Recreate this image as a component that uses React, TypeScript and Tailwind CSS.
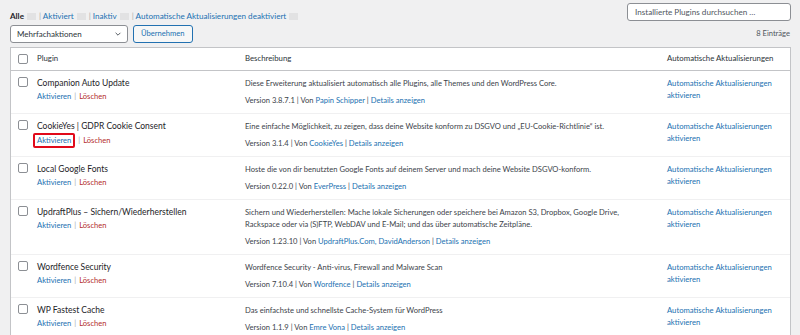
import React from 'react';

type Plugin = {
  name: string;
  desc: string[];
  version: string;
  authors: string;
  highlight?: boolean;
};

const plugins: Plugin[] = [
  {
    name: 'Companion Auto Update',
    desc: ['Diese Erweiterung aktualisiert automatisch alle Plugins, alle Themes und den WordPress Core.'],
    version: '3.8.7.1',
    authors: 'Papin Schipper',
  },
  {
    name: 'CookieYes | GDPR Cookie Consent',
    desc: ['Eine einfache Möglichkeit, zu zeigen, dass deine Website konform zu DSGVO und „EU-Cookie-Richtlinie“ ist.'],
    version: '3.1.4',
    authors: 'CookieYes',
    highlight: true,
  },
  {
    name: 'Local Google Fonts',
    desc: ['Hoste die von dir benutzten Google Fonts auf deinem Server und mach deine Website DSGVO-konform.'],
    version: '0.22.0',
    authors: 'EverPress',
  },
  {
    name: 'UpdraftPlus – Sichern/Wiederherstellen',
    desc: [
      'Sichern und Wiederherstellen: Mache lokale Sicherungen oder speichere bei Amazon S3, Dropbox, Google Drive,',
      'Rackspace oder via (S)FTP, WebDAV und E-Mail; und das über automatische Zeitpläne.',
    ],
    version: '1.23.10',
    authors: 'UpdraftPlus.Com, DavidAnderson',
  },
  {
    name: 'Wordfence Security',
    desc: ['Wordfence Security - Anti-virus, Firewall and Malware Scan'],
    version: '7.10.4',
    authors: 'Wordfence',
  },
  {
    name: 'WP Fastest Cache',
    desc: ['Das einfachste und schnellste Cache-System für WordPress'],
    version: '1.1.9',
    authors: 'Emre Vona',
  },
];

const Count = () => <span className="inline-block w-[9px] h-[7px] bg-[#e2e2e3] mx-[3px] align-middle" />;

const Checkbox = () => (
  <div className="w-[10px] h-[10px] border border-[#8c8f94] rounded-[2px] bg-white" />
);

export default function App() {
  return (
    <div
      className="w-[800px] h-[335px] overflow-hidden bg-[#f0f0f1] pl-[10px] pr-[9px] text-[7.6px] text-[#3c434a] whitespace-nowrap"
      style={{ fontFamily: 'Lato, "Open Sans", sans-serif' }}
    >
      {/* Filter + Suche */}
      <div className="flex items-start justify-between pt-[3px] h-[23px]">
        <div className="pt-[7px] leading-[12px] text-[8.1px] text-[#a7aaad]">
          <span className="font-bold text-[#1d2327]">Alle</span>
          <Count />|{' '}
          <span className="text-[#2271b1]">Aktiviert</span>
          <Count />|{' '}
          <span className="text-[#2271b1]">Inaktiv</span>
          <Count />|{' '}
          <span className="text-[#2271b1]">Automatische Aktualisierungen deaktiviert</span>
          <Count />
        </div>
        <div className="w-[164px] h-[18px] border border-[#8c8f94] rounded-[3px] bg-white px-[7px] flex items-center text-[8.1px] text-[#50575e]">
          Installierte Plugins durchsuchen …
        </div>
      </div>

      {/* Mehrfachaktionen */}
      <div className="flex items-center justify-between h-[21px]">
        <div className="flex items-center gap-[5px]">
          <div className="w-[118px] h-[18px] border border-[#8c8f94] rounded-[3px] bg-white pl-[6px] pr-[5px] flex items-center justify-between text-[8px] text-[#2c3338]">
            <span>Mehrfachaktionen</span>
            <svg width="8" height="8" viewBox="0 0 20 20" fill="none" stroke="#50575e" strokeWidth="2.4">
              <path d="M4 7l6 6 6-6" />
            </svg>
          </div>
          <div className="h-[18px] px-[7px] border border-[#2271b1] rounded-[3px] bg-[#f6f7f7] text-[#2271b1] flex items-center">
            Übernehmen
          </div>
        </div>
        <div className="text-[#50575e] pr-[1px] pt-[1px]">8 Einträge</div>
      </div>

      {/* Tabelle */}
      <div className="mt-[3px] bg-white border border-[#c3c4c7]">
        <div className="grid grid-cols-[26px_208px_422px_1fr] h-[23px] items-center border-b border-[#c3c4c7] text-[7.8px] text-[#2c3338]">
          <div className="pl-[7px]"><Checkbox /></div>
          <div>Plugin</div>
          <div>Beschreibung</div>
          <div>Automatische Aktualisierungen</div>
        </div>
        {plugins.map((p) => (
          <div key={p.name} className="grid grid-cols-[26px_208px_422px_1fr] border-b border-[#f0f0f1] pt-[6px] pb-[6px]">
            <div className="pl-[7px]"><Checkbox /></div>
            <div>
              <div className="text-[8.5px] leading-[13px] text-[#1d2327]">{p.name}</div>
              <div className="leading-[13px] flex items-center">
                <span
                  className={
                    p.highlight
                      ? 'text-[#2271b1] border-2 border-[#e10a1a] rounded-[2px] px-[2px] -ml-[4px] leading-[9px] py-[1px]'
                      : 'text-[#2271b1]'
                  }
                >
                  Aktivieren
                </span>
                <span className="text-[#a7aaad] mx-[3px]">|</span>
                <span className="text-[#b32d2e]">Löschen</span>
              </div>
            </div>
            <div>
              <div className="leading-[12px] text-[#3c434a]">
                {p.desc.map((l) => (
                  <div key={l}>{l}</div>
                ))}
              </div>
              <div className="mt-[5px] leading-[13px] text-[#3c434a]">
                Version {p.version} | Von <span className="text-[#2271b1]">{p.authors}</span> |{' '}
                <span className="text-[#2271b1]">Details anzeigen</span>
              </div>
            </div>
            <div className="leading-[11.5px] text-[7.7px] text-[#2271b1] pt-[1px]">
              <div>Automatische Aktualisierungen</div>
              <div>aktivieren</div>
            </div>
          </div>
        ))}
      </div>
    </div>
  );
}
